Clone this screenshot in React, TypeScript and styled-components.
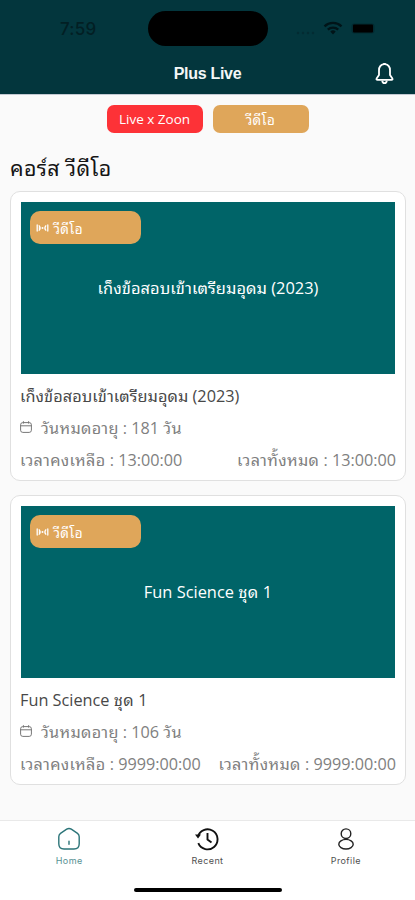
import React from 'react';
import styled, { createGlobalStyle } from 'styled-components';

const Global = createGlobalStyle`
  * { box-sizing: border-box; }
  body { margin: 0; background: #fafafa; font-family: "Noto Sans", "Noto Sans Thai", sans-serif; }
`;

const Screen = styled.div`
  width: 415px;
  height: 900px;
  display: flex;
  flex-direction: column;
  overflow: hidden;
  background: #fafafa;
`;

const Header = styled.header`
  height: 95px;
  flex: none;
  background: #03363d;
  border-bottom: 1px solid #c3c9d2;
`;

const StatusBar = styled.div`
  height: 53px;
  padding-top: 11px;
  display: grid;
  grid-template-columns: 148px 120px 1fr;
`;

const Clock = styled.div`
  padding: 8px 0 0 60px;
  font: 500 17px/20px Inter, sans-serif;
  letter-spacing: 0.2px;
  color: #021f24;
`;

const Island = styled.div`
  height: 35px;
  border-radius: 18px;
  background: #000;
`;

const StatusIcons = styled.div`
  padding: 8px 0 0 28px;
  display: flex;
  align-items: flex-start;
`;

const TitleBar = styled.div`
  height: 41px;
  display: grid;
  grid-template-columns: 60px 1fr 60px;
  align-items: center;
  justify-items: center;
`;

const Title = styled.h1`
  grid-column: 2;
  margin: 0;
  font: 700 16px/20px "Liberation Sans", sans-serif;
  letter-spacing: -0.3px;
  color: #f4f7f7;
`;

const Content = styled.main`
  flex: 1;
  padding: 10px 9px 0 10px;
`;

const Filters = styled.div`
  display: flex;
  justify-content: center;
  gap: 10px;
  padding-right: 1px;
`;

const Filter = styled.button<{ $color: string }>`
  width: 96px;
  height: 28px;
  padding: 0;
  border: 0;
  border-radius: 7px;
  background: ${(p) => p.$color};
  color: #fff;
  font: 400 13.5px/28px "Open Sans", "Noto Sans Thai", sans-serif;
`;

const Thai = styled.span<{ $track?: number }>`
  font-family: "Noto Sans Thai Looped", "Noto Looped Thai", "Droid Sans Thai", Loma, Garuda, Waree, "Noto Serif Thai", "Noto Sans Thai", sans-serif;
  letter-spacing: ${(p) => p.$track ?? 0.35}px;
`;

const Heading = styled.h2`
  height: 58px;
  margin: 0;
  padding-top: 18px;
  font-weight: 400;
  font-size: 21.4px;
  line-height: 30px;
  color: #151515;
  white-space: nowrap;
`;

const CardList = styled.div`
  display: flex;
  flex-direction: column;
  gap: 14px;
`;

const Card = styled.article`
  height: 290px;
  padding: 10px 9px;
  border: 1px solid #e0e0e0;
  border-radius: 10px;
  background: #fff;
`;

const Thumb = styled.div`
  height: 172px;
  margin: 0 1px;
  padding: 9px 8.5px;
  display: grid;
  grid-template-rows: 33px 86px 1fr;
  background: #006468;
`;

const Badge = styled.div`
  width: 111px;
  height: 33px;
  padding-left: 6px;
  display: flex;
  align-items: center;
  gap: 5px;
  border-radius: 10px;
  background: #dfa65a;
  color: #fff;
  font-size: 13.5px;
  line-height: 20px;
`;

const ThumbTitle = styled.div`
  align-self: center;
  justify-self: center;
  font-family: "Open Sans", sans-serif;
  font-size: 16.4px;
  line-height: 24px;
  color: #fff;
  white-space: nowrap;
`;

const Name = styled.div`
  height: 24px;
  margin-top: 9px;
  font-family: "Open Sans", sans-serif;
  font-size: 16.3px;
  line-height: 24px;
  color: #484848;
  white-space: nowrap;
`;

const Meta = styled.div`
  height: 24px;
  margin-top: 8px;
  display: flex;
  align-items: center;
  font-family: "Open Sans", sans-serif;
  font-size: 16.2px;
  line-height: 24px;
  color: #808080;
  white-space: nowrap;
`;

const Times = styled(Meta)`
  justify-content: space-between;
`;

const CalendarIcon = styled.svg`
  margin-right: 9px;
  flex: none;
`;

const TabBar = styled.nav`
  height: 80px;
  flex: none;
  border-top: 1px solid #e9e9e9;
  background: #fff;
`;

const Tabs = styled.div`
  height: 67px;
  padding-top: 6px;
  display: grid;
  grid-template-columns: repeat(3, 1fr);
`;

const Tab = styled.a<{ $active?: boolean }>`
  display: flex;
  flex-direction: column;
  align-items: center;
  gap: 4px;
  color: ${(p) => (p.$active ? '#2b7478' : '#222')};
`;

const TabLabel = styled.span`
  font: 400 9px/12px Inter, sans-serif;
  letter-spacing: 0.4px;
  opacity: 0.8;
`;

const HomeIndicator = styled.div`
  width: 148px;
  height: 4px;
  margin: 0 auto;
  border-radius: 2px;
  background: #000;
`;

const TabIcon = ({ children }: { children: React.ReactNode }) => (
  <svg width="24" height="24" viewBox="0 0 24 24" fill="none" stroke="currentColor" strokeWidth="1.4" strokeLinecap="round" strokeLinejoin="round">
    {children}
  </svg>
);

type Course = {
  title: React.ReactNode;
  days: string;
  time: string;
};

const courses: Course[] = [
  { title: <><Thai $track={0.05}>เก็งข้อสอบเข้าเตรียมอุดม</Thai> (2023)</>, days: '181', time: '13:00:00' },
  { title: <>Fun Science <Thai>ชุด</Thai> 1</>, days: '106', time: '9999:00:00' },
];

const CourseCard = ({ title, days, time }: Course) => (
  <Card>
    <Thumb>
      <Badge>
        <svg width="13" height="12" viewBox="0 0 13 12" fill="none" stroke="#fff" strokeWidth="1.3" strokeLinecap="round">
          <path d="M1.2 3v6M3.2 3.8c1 1.2 1 3.2 0 4.4M11.8 3v6M9.8 3.8c-1 1.2-1 3.2 0 4.4M3.2 6h1" />
          <circle cx="6.5" cy="6" r="1" fill="#fff" stroke="none" />
        </svg>
        <Thai>วีดีโอ</Thai>
      </Badge>
      <ThumbTitle>{title}</ThumbTitle>
    </Thumb>
    <Name>{title}</Name>
    <Meta>
      <CalendarIcon width="12" height="12" viewBox="0 0 12 12" fill="none" stroke="#777" strokeWidth="1">
        <rect x=".6" y="1.6" width="10.8" height="9.8" rx="2.2" />
        <path d="M.6 4.8h10.8M3.4.2v2.4M8.6.2v2.4" />
      </CalendarIcon>
      <span><Thai $track={0.3}>วันหมดอายุ</Thai> : {days} <Thai>วัน</Thai></span>
    </Meta>
    <Times>
      <span><Thai>เวลาคงเหลือ</Thai> : {time}</span>
      <span><Thai>เวลาทั้งหมด</Thai> : {time}</span>
    </Times>
  </Card>
);

export default function App() {
  return (
    <>
      <Global />
      <Screen>
        <Header>
          <StatusBar>
            <Clock>7:59</Clock>
            <Island />
            <StatusIcons>
              <svg width="82" height="18" viewBox="0 0 82 18">
                <g fill="#042c33">
                  <circle cx="2" cy="14" r="1.2" /><circle cx="7" cy="14" r="1.2" />
                  <circle cx="12" cy="14" r="1.2" /><circle cx="17" cy="14" r="1.2" />
                </g>
                <g fill="none" stroke="#011418" strokeWidth="2.3">
                  <path d="M28.5 7.3a12.4 12.4 0 0 1 17 0M31.8 10.7a7.5 7.5 0 0 1 10.4 0" />
                </g>
                <path d="M34.3 12.6a4 4 0 0 1 5.4 0L37 15.4z" fill="#011418" />
                <rect x="55.5" y="4.5" width="23" height="10" rx="3" fill="#022a31" />
                <rect x="57" y="5.5" width="20" height="8" rx="1" fill="#000" />
              </svg>
            </StatusIcons>
          </StatusBar>
          <TitleBar>
            <Title>Plus Live</Title>
            <svg width="22" height="24" viewBox="0 0 22 24" fill="none" stroke="#fff" strokeWidth="1.8" strokeLinejoin="round">
              <path d="M10 2.2C6.8 2.8 5 5.2 5 8.2v4.8L2.6 16.6c-.4.8 0 1.3.8 1.3h14.2c.8 0 1.2-.5.8-1.3L16 13V8.2c0-3-1.8-5.4-5-6z" />
              <path d="M8.2 18.6c.4 3.4 4.2 3.4 4.6 0M9.3 1.9h2.4" />
            </svg>
          </TitleBar>
        </Header>
        <Content>
          <Filters>
            <Filter $color="#fd3237">Live x Zoon</Filter>
            <Filter $color="#dfa65a"><Thai>วีดีโอ</Thai></Filter>
          </Filters>
          <Heading><Thai>คอร์ส วีดีโอ</Thai></Heading>
          <CardList>
            {courses.map((course) => <CourseCard key={course.days} {...course} />)}
          </CardList>
        </Content>
        <TabBar>
          <Tabs>
            <Tab $active>
              <TabIcon>
                <path d="M9.7 2.2 3.5 6.3C2.2 7.2 1.8 8.3 1.8 9.8v7c0 3.7 1.5 5.2 5.2 5.2h10c3.7 0 5.2-1.5 5.2-5.2v-7c0-1.5-.4-2.6-1.7-3.5l-6.2-4.1c-1.6-1-3-1-4.6 0zM12 14.2v3" />
              </TabIcon>
              <TabLabel>Home</TabLabel>
            </Tab>
            <Tab>
              <svg width="24" height="24" viewBox="0 0 24 24" fill="none" stroke="#111" strokeWidth="1.9">
                <path d="M2.8 10A10 10 0 1 1 3.3 16.2M12.5 6v6.4l4 3" />
                <path d="M0 7.5h6L3 11.5z" fill="#111" stroke="none" />
              </svg>
              <TabLabel>Recent</TabLabel>
            </Tab>
            <Tab>
              <TabIcon>
                <circle cx="12" cy="6.7" r="4.8" />
                <ellipse cx="12" cy="17.2" rx="7.2" ry="4.8" />
              </TabIcon>
              <TabLabel>Profile</TabLabel>
            </Tab>
          </Tabs>
          <HomeIndicator />
        </TabBar>
      </Screen>
    </>
  );
}
